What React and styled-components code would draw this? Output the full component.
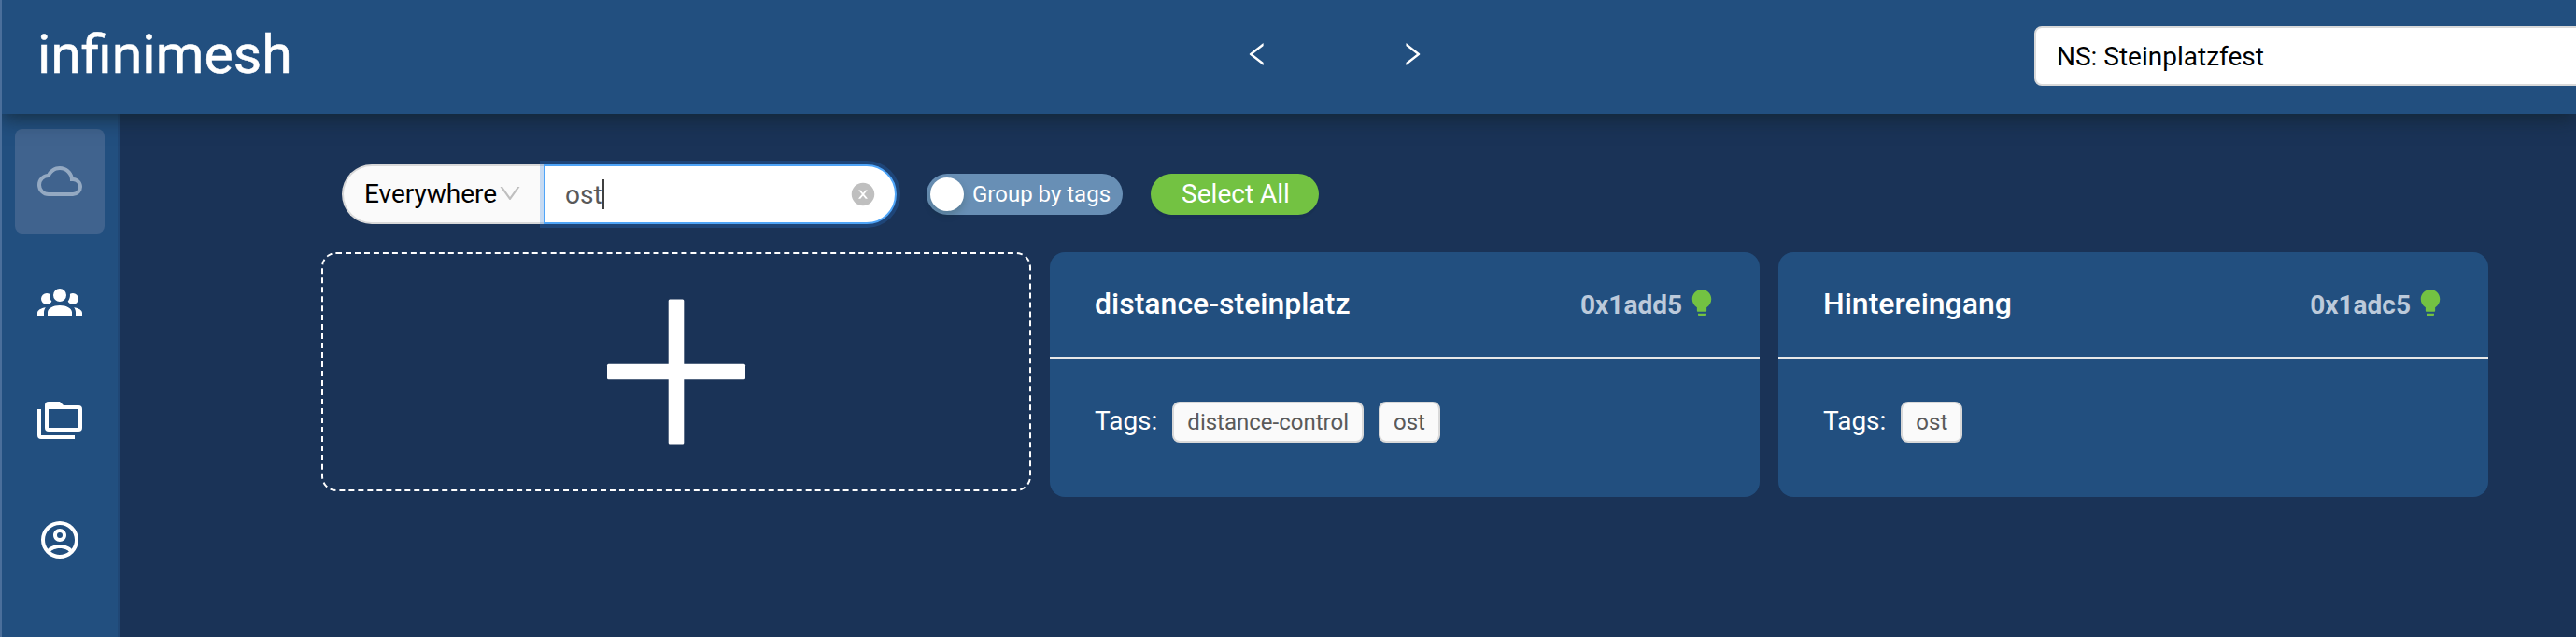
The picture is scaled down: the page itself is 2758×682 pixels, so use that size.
import React from "react";
import styled, { createGlobalStyle } from "styled-components";

const Global = createGlobalStyle`
  *, *::before, *::after { box-sizing: border-box; }
  html, body { margin: 0; padding: 0; background: #1a3357; overflow: hidden; }
  body { font-family: Roboto, "Liberation Sans", sans-serif; font-size: 28px; color: #fff; }
`;

const Page = styled.div`
  display: flex;
  flex-direction: column;
  height: 682px;
  border-left: 2px solid #4b6f9b;
`;

const Header = styled.header`
  display: flex;
  align-items: center;
  height: 122px;
  flex: none;
  padding-left: 38px;
  background: #224f7f;
  box-shadow: 0 4px 20px rgba(16, 32, 40, 0.75);
  z-index: 2;
  clip-path: inset(0 0 -40px 0);
`;

const Logo = styled.div`
  flex: none;
  width: 1290px;
  font-size: 58px;
  -webkit-text-stroke: 0.5px #fff;
  line-height: 64px;
  padding-bottom: 6px;

  span {
    display: inline-block;
    transform: scaleX(1.018);
    transform-origin: 0 50%;
  }
`;

const Pager = styled.nav`
  display: flex;
  flex: none;
  gap: 134px;
  width: 198px;
  margin-bottom: 6px;
`;

const Namespace = styled.div`
  flex: none;
  width: 640px;
  height: 64px;
  margin: 0 0 2px 650px;
  padding: 0 22px;
  border: 2px solid #d9d9d9;
  border-radius: 8px;
  background: #fff;
  color: #000;
  line-height: 62px;
`;

const Body = styled.div`
  display: flex;
  flex: 1;
  min-height: 0;
`;

const Sidebar = styled.aside`
  display: flex;
  flex-direction: column;
  gap: 16px;
  flex: none;
  width: 126px;
  padding: 16px 14px;
  background: #224f7f;
  border-right: 2px solid #204775;
`;

const SideItem = styled.a`
  display: flex;
  align-items: center;
  justify-content: center;
  flex: none;
  width: 96px;
  height: 112px;
  border-radius: 8px;
  background: ${(p) => (p.$active ? "#40638e" : "transparent")};
  color: ${(p) => (p.$active ? "#94a9c2" : "#fff")};
`;

const Main = styled.main`
  flex: 1;
  padding: 54px 94px 0 216px;
`;

const Toolbar = styled.div`
  display: flex;
  align-items: center;
  height: 64px;
  margin: 0 0 30px 22px;
`;

const Scope = styled.div`
  display: flex;
  align-items: center;
  width: 216px;
  height: 64px;
  padding: 0 0 2px 22px;
  border: 2px solid #d9d9d9;
  border-right: 0;
  border-radius: 32px 0 0 32px;
  background: #fafafa;
  color: #000;
`;

const SearchField = styled.div`
  display: flex;
  align-items: center;
  width: 378px;
  height: 64px;
  padding: 0 20px 0 21px;
  border: 2px solid #4fa5f8;
  border-radius: 0 32px 32px 0;
  background: #fff;
  color: #595959;
  box-shadow: 0 0 0 4px rgba(45, 123, 220, 0.25);
`;

const Caret = styled.span`
  width: 2px;
  height: 32px;
  background: #404040;
  margin-right: auto;
`;

const Toggle = styled.div`
  display: flex;
  align-items: center;
  gap: 9px;
  width: 210px;
  height: 44px;
  margin: 0 30px 0 32px;
  padding-left: 4px;
  border-radius: 22px;
  background: #688fb5;
  font-size: 24px;
  white-space: nowrap;
`;

const Knob = styled.span`
  flex: none;
  width: 36px;
  height: 36px;
  border-radius: 50%;
  background: #fff;
  box-shadow: 0 4px 8px rgba(0, 35, 11, 0.2);
`;

const SelectAll = styled.button`
  width: 180px;
  height: 44px;
  padding: 0 0 0 2px;
  border: 0;
  border-radius: 22px;
  background: #73c242;
  color: #fff;
  font: 28px/44px Roboto, sans-serif;
  box-shadow: 0 4px 0 rgba(0, 0, 0, 0.045);
`;

const Cards = styled.div`
  display: grid;
  grid-template-columns: repeat(3, 760px);
  gap: 20px;
  align-items: start;
`;

const AddCard = styled.div`
  display: flex;
  align-items: center;
  justify-content: center;
  height: 256px;
  border: 2px dashed #fff;
  border-radius: 16px;
`;

const Card = styled.article`
  height: 262px;
  border-radius: 16px;
  background: #224f7f;
`;

const CardHead = styled.div`
  display: flex;
  align-items: center;
  height: 114px;
  padding: 0 46px 4px 48px;
  border-bottom: 2px solid #e8e8e8;
`;

const CardTitle = styled.h3`
  flex: 1;
  margin: 2px 0 0;
  font-size: 32px;
  font-weight: 500;
`;

const DeviceId = styled.span`
  margin: 4px 5px 0 0;
  font-weight: 700;
  color: #bccadb;
`;

const TagRow = styled.div`
  display: flex;
  align-items: center;
  gap: 16px;
  padding: 46px 48px 0;
`;

const TagLabel = styled.span`
  margin-top: -3px;
`;

const Tag = styled.span`
  height: 44px;
  padding: 0 14px;
  border: 2px solid #d9d9d9;
  border-radius: 8px;
  background: #fafafa;
  color: #595959;
  font-size: 24px;
  line-height: 40px;
`;

const Svg = styled.svg`
  display: block;
  flex: none;
  width: ${(p) => p.$size}px;
  height: ${(p) => p.$size}px;
  fill: ${(p) => p.$color || "currentColor"};
`;

const Mdi = ({ d }) => (
  <Svg $size={48} viewBox="0 0 24 24"><path d={d} /></Svg>
);
const Ant = ({ d, size, color }) => (
  <Svg $size={size} $color={color} viewBox="0 0 1024 1024"><path d={d} /></Svg>
);

const cloud = "M19,18H6A4,4 0 0,1 2,14A4,4 0 0,1 6,10H6.71C7.37,7.69 9.5,6 12,6A5.5,5.5 0 0,1 17.5,11.5V12H19A3,3 0 0,1 22,15A3,3 0 0,1 19,18M19.35,10.03C18.67,6.59 15.64,4 12,4C9.11,4 6.6,5.64 5.35,8.03C2.34,8.36 0,10.9 0,14A6,6 0 0,0 6,20H19A5,5 0 0,0 24,15C24,12.36 21.95,10.22 19.35,10.03Z";
const group = "M12,5.5A3.5,3.5 0 0,1 15.5,9A3.5,3.5 0 0,1 12,12.5A3.5,3.5 0 0,1 8.5,9A3.5,3.5 0 0,1 12,5.5M5,8C5.56,8 6.08,8.15 6.53,8.42C6.38,9.85 6.8,11.27 7.66,12.38C7.16,13.34 6.16,14 5,14A3,3 0 0,1 2,11A3,3 0 0,1 5,8M19,8A3,3 0 0,1 22,11A3,3 0 0,1 19,14C17.84,14 16.84,13.34 16.34,12.38C17.2,11.27 17.62,9.85 17.47,8.42C17.92,8.15 18.44,8 19,8M5.5,18.25C5.5,16.18 8.41,14.5 12,14.5C15.59,14.5 18.5,16.18 18.5,18.25V20H5.5V18.25M0,20V18.5C0,17.11 1.89,15.94 4.45,15.6C3.86,16.28 3.5,17.22 3.5,18.25V20H0M24,20H20.5V18.25C20.5,17.22 20.14,16.28 19.55,15.6C22.11,15.94 24,17.11 24,18.5V20Z";
const folders = "M22,4A2,2 0 0,1 24,6V16A2,2 0 0,1 22,18H6A2,2 0 0,1 4,16V4A2,2 0 0,1 6,2H12L14,4H22M2,6V20H20V22H2A2,2 0 0,1 0,20V11H0V6H2M6,6V16H22V6H6Z";
const account = "M12,2A10,10 0 0,0 2,12A10,10 0 0,0 12,22A10,10 0 0,0 22,12A10,10 0 0,0 12,2M7.07,18.28C7.5,17.38 10.12,16.5 12,16.5C13.88,16.5 16.5,17.38 16.93,18.28C15.57,19.36 13.86,20 12,20C10.14,20 8.43,19.36 7.07,18.28M18.36,16.83C16.93,15.09 13.46,14.5 12,14.5C10.54,14.5 7.07,15.09 5.64,16.83C4.62,15.5 4,13.82 4,12C4,7.59 7.59,4 12,4C16.41,4 20,7.59 20,12C20,13.82 19.38,15.5 18.36,16.83M12,6C10.06,6 8.5,7.56 8.5,9.5C8.5,11.44 10.06,13 12,13C13.94,13 15.5,11.44 15.5,9.5C15.5,7.56 13.94,6 12,6M12,11A1.5,1.5 0 0,1 10.5,9.5A1.5,1.5 0 0,1 12,8A1.5,1.5 0 0,1 13.5,9.5A1.5,1.5 0 0,1 12,11Z";
const left = "M724 218.3V141c0-6.7-7.7-10.4-12.9-6.3L260.3 486.8a31.86 31.86 0 000 50.3l450.8 352.1c5.3 4.1 12.9.4 12.9-6.3v-77.3c0-4.9-2.3-9.6-6.1-12.6l-360-281 360-281.1c3.8-3 6.1-7.7 6.1-12.6z";
const right = "M765.7 486.8L314.9 134.7A7.97 7.97 0 00302 141v77.3c0 4.9 2.3 9.6 6.1 12.6l360 281.1-360 281.1c-3.9 3-6.1 7.7-6.1 12.6V883c0 6.7 7.7 10.4 12.9 6.3l450.8-352.1a31.96 31.96 0 000-50.4z";
const down = "M884 256h-75c-5.1 0-9.9 2.5-12.9 6.6L512 654.2 227.9 262.6c-3-4.1-7.8-6.6-12.9-6.6h-75c-6.5 0-10.3 7.4-6.5 12.7l352.6 486.1c12.8 17.6 39 17.6 51.7 0l352.6-486.1c3.9-5.3.1-12.7-6.4-12.7z";
const clear = "M512 64C264.6 64 64 264.6 64 512s200.6 448 448 448 448-200.6 448-448S759.4 64 512 64zm165.4 618.2l-66-.3L512 563.4l-99.3 118.4-66.1.3c-4.4 0-8-3.5-8-8 0-1.9.7-3.7 1.9-5.2l130.1-155L340.5 359a8.32 8.32 0 01-1.9-5.2c0-4.4 3.6-8 8-8l66.1.3L512 464.6l99.3-118.4 66-.3c4.4 0 8 3.5 8 8 0 1.9-.7 3.7-1.9 5.2L553.5 514l130 155c1.2 1.5 1.9 3.3 1.9 5.2 0 4.4-3.6 8-8 8z";
const bulb = "M348 676.1C250 619.4 184 513.4 184 392c0-181.1 146.9-328 328-328s328 146.9 328 328c0 121.4-66 227.4-164 284.1V792c0 17.7-14.3 32-32 32H380c-17.7 0-32-14.3-32-32V676.1zM392 888h240c4.4 0 8 3.6 8 8v32c0 17.7-14.3 32-32 32H416c-17.7 0-32-14.3-32-32v-32c0-4.4 3.6-8 8-8z";

const navItems = [cloud, group, folders, account];
const devices = [
  { name: "distance-steinplatz", id: "0x1add5", tags: ["distance-control", "ost"] },
  { name: "Hintereingang", id: "0x1adc5", tags: ["ost"] },
];

export default function App() {
  return (
    <Page>
      <Global />
      <Header>
        <Logo><span>infinimesh</span></Logo>
        <Pager>
          <Ant d={left} size={32} />
          <Ant d={right} size={32} />
        </Pager>
        <Namespace>NS: Steinplatzfest</Namespace>
      </Header>
      <Body>
        <Sidebar>
          {navItems.map((d, i) => (
            <SideItem key={i} $active={i === 0}><Mdi d={d} /></SideItem>
          ))}
        </Sidebar>
        <Main>
          <Toolbar>
            <Scope>
              Everywhere
              <Ant d={down} size={28} color="#bfbfbf" />
            </Scope>
            <SearchField>
              ost
              <Caret />
              <Ant d={clear} size={28} color="#bfbfbf" />
            </SearchField>
            <Toggle><Knob />Group by tags</Toggle>
            <SelectAll>Select All</SelectAll>
          </Toolbar>
          <Cards>
            <AddCard>
              <Svg $size={184} viewBox="0 0 184 184">
                <rect x="83.7" y="14.5" width="16.6" height="155" rx="1.5" />
                <rect x="18" y="83.7" width="148" height="16.6" rx="1.5" />
              </Svg>
            </AddCard>
            {devices.map((device) => (
              <Card key={device.id}>
                <CardHead>
                  <CardTitle>{device.name}</CardTitle>
                  <DeviceId>{device.id}</DeviceId>
                  <Ant d={bulb} size={32} color="#73c242" />
                </CardHead>
                <TagRow>
                  <TagLabel>Tags:</TagLabel>
                  {device.tags.map((tag) => <Tag key={tag}>{tag}</Tag>)}
                </TagRow>
              </Card>
            ))}
          </Cards>
        </Main>
      </Body>
    </Page>
  );
}
